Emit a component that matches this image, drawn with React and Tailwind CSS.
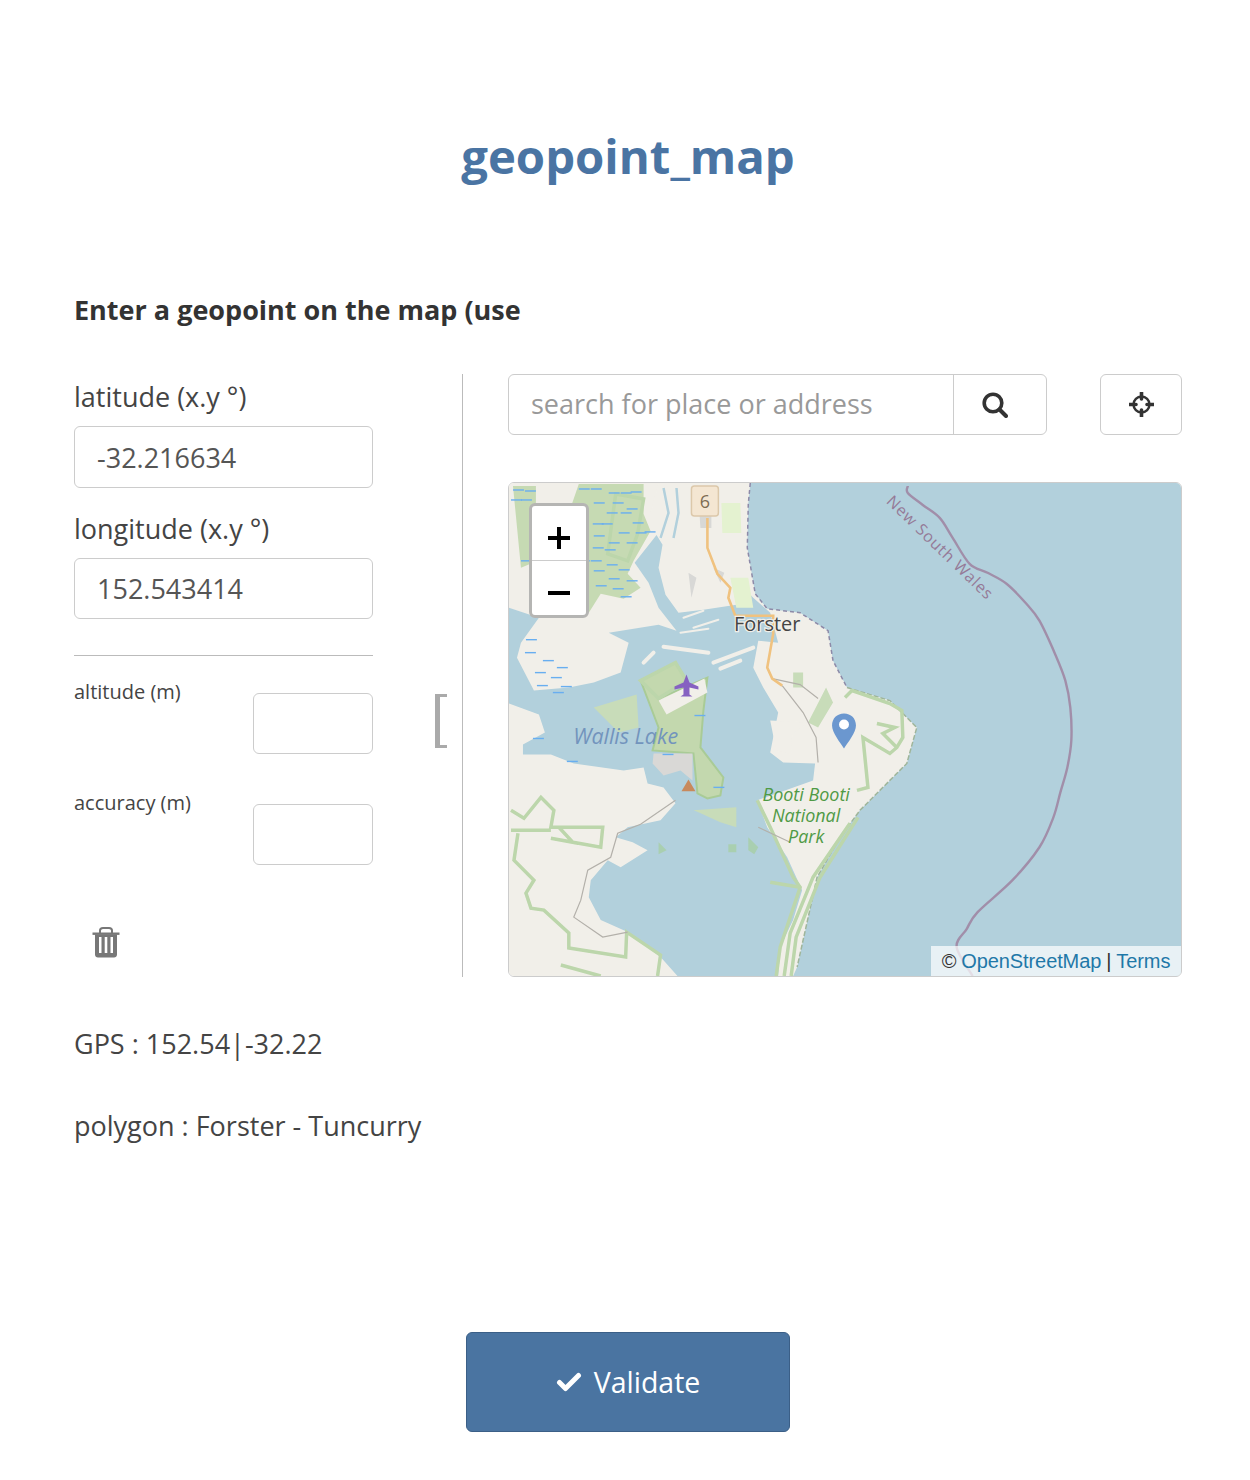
const ocean = 'M242,0 L240,21 239,65 247,111 259,126 292,130 320,148 325,178 339,205 382,218 409,245 399,281 382,298 352,328 332,355 309,395 289,485 285,494 674,494 674,0 Z';
const lake = 'M0,60 L126,80 148,52 154,62 150,85 157,112 170,130 195,127 228,122 235,105 245,115 262,130 270,160 250,158 245,185 255,205 270,230 262,270 275,280 307,281 305,298 249,318 259,345 279,375 294,408 285,438 272,465 270,494 169,494 152,475 119,450 92,438 80,415 82,398 99,378 112,385 139,368 124,360 107,355 119,345 152,338 167,321 155,305 139,301 135,285 115,288 65,281 42,272 14,272 14,262 36,250 30,232 0,221 Z';
const northLand = 'M0,0 L150,0 142,30 132,60 126,80 140,100 150,125 168,148 150,142 100,150 120,160 112,190 85,200 60,205 25,208 8,175 12,160 30,135 0,125 Z';
const islandWood = 'M132,198 L167,180 178,198 150,216 199,195 195,228 192,265 215,295 212,313 199,316 189,311 185,271 144,268 150,245 Z';

const stateBorder = [
  [400, 3], [400, 10], [415, 22], [432, 35], [445, 55], [462, 81], [480, 90], [499, 101], [518, 120], [532, 138], [548, 172], [558, 198],
  [563, 225], [564, 258], [560, 285], [553, 310], [546, 335], [532, 365], [505, 398], [470, 430], [459, 447], [449, 465], [465, 494],
];

const marshDashes = [
  [4, 7], [16, 8], [2, 17], [12, 17], [70, 6], [82, 6], [100, 10], [112, 10], [122, 9], [85, 20], [104, 20], [118, 26], [98, 30], [112, 30],
  [124, 40], [84, 41], [93, 41], [110, 50], [127, 50], [136, 49], [85, 53], [100, 60], [118, 60], [84, 65], [96, 67], [12, 78], [70, 78],
  [82, 78], [98, 82], [110, 87], [85, 88], [100, 96], [118, 98], [87, 103], [104, 106], [112, 114], [17, 157], [16, 170], [34, 178], [26, 190],
  [48, 185], [42, 195], [28, 203], [52, 204], [44, 210], [24, 256], [58, 279], [154, 272], [205, 305], [186, 233],
];

const parkBorders = [
  'M2,328 L15,336 32,315 45,328 42,345 94,345 92,365 42,356 64,360 50,345',
  'M2,348 L42,348 M9,351 L5,378 25,398 17,411 22,426 35,428 60,451 60,466 117,475 118,450 152,473 149,494',
  'M52,483 L92,494',
  'M107,11 L135,16 129,51 119,78 99,71 Z',
  'M132,198 L167,180 178,198 150,216 Z',
  'M337,215 L344,208 382,221 394,228 395,255 389,265 382,271 355,255 360,305 349,308',
  'M369,241 L387,245 375,251 389,265',
  'M249,318 L262,345 285,395 292,405 272,465 268,494',
  'M342,341 L305,395 282,451 276,494',
  'M350,335 L312,395 288,455 283,494',
  'M292,405 L262,400',
];

// catmull-rom through the points, so the state border reads as a curve
function smooth(points) {
  let d = `M${points[0][0]},${points[0][1]}`;
  for (let i = 0; i < points.length - 1; i++) {
    const p0 = points[i - 1] || points[i];
    const p1 = points[i];
    const p2 = points[i + 1];
    const p3 = points[i + 2] || p2;
    d += ` C${p1[0] + (p2[0] - p0[0]) / 6},${p1[1] + (p2[1] - p0[1]) / 6} ${p2[0] - (p3[0] - p1[0]) / 6},${p2[1] - (p3[1] - p1[1]) / 6} ${p2[0]},${p2[1]}`;
  }
  return d;
}

function MapDrawing() {
  return (
    <svg viewBox="0 0 674 494" preserveAspectRatio="none" className="block w-full h-full font-['Open_Sans',sans-serif]">
      <defs>
        <filter id="soft">
          <feGaussianBlur stdDeviation="0.7" />
        </filter>
      </defs>
      <rect width="674" height="494" fill="#f1efe9" />
      <g filter="url(#soft)">
        <path d={lake} fill="#b2d0dc" />
        <path d={northLand} fill="#f1efe9" />
        <path d="M152,55 L160,30 155,5 M165,55 L170,30 168,5" fill="none" stroke="#b2d0dc" strokeWidth="2.5" />
        <g fill="none" stroke="#f1efe9" strokeLinecap="round">
          <path d="M155,164 L200,170 M205,180 L245,165 M135,180 L145,170 M212,186 L232,178" strokeWidth="4" />
          <path d="M175,135 L195,128 M185,145 L210,137 M172,150 L200,146" strokeWidth="2" />
        </g>
        <path d="M262,238 L268,268 283,272 284,252 300,240 Z" fill="#f1efe9" />
        <path d="M70,1 L135,1 135,31 142,48 125,78 119,91 132,105 115,116 92,111 80,130 60,100 60,30 Z" fill="#c6dab3" />
        <path d="M4,3 L27,3 27,28 20,50 24,80 12,85 Z" fill="#c6dab3" />
        <path d={islandWood} fill="#c3d8ae" stroke="#a9cb96" strokeWidth="2" />
        <path d="M150,218 L196,196 199,210 158,232 Z" fill="#f1efe9" />
        <path d="M145,271 L184,271 184,298 172,288 155,293 144,281 Z" fill="#d9d8d6" />
        <path d="M85,225 L128,212 130,245 110,250 Z M185,328 L228,325 228,345 212,340 190,330 Z" fill="#c8dcb9" />
        <path d="M240,355 L250,365 246,372 240,368 Z M150,360 L158,368 150,372 Z M220,362 L228,362 228,370 220,370 Z" fill="#a9cfb0" />
        <path d="M213,20 L232,20 233,50 214,50 Z M222,95 L240,95 245,125 228,125 Z" fill="#e4f2d0" />
        <path d="M190,15 L203,15 203,45 192,45 Z M205,85 L216,90 212,100 Z M180,90 L188,95 183,115 Z" fill="#d8d8d6" />
        <path d="M285,190 L295,190 295,205 285,205 Z M300,240 L318,205 325,220 310,245 Z" fill="#c8dcb9" />
        <path d={ocean} fill="#b2d0dc" />
        <path d="M242,0 L240,21 239,65 247,111 259,126 292,130 320,148 325,178 339,205" fill="none" stroke="#8d8aa8" strokeWidth="1.5" strokeDasharray="4 3" />
        <path d="M339,205 L382,218 409,245 399,281 382,298 352,328 332,355 309,395 289,485" fill="none" stroke="#9fb59a" strokeWidth="1.5" strokeDasharray="5 2" />
        {parkBorders.map((d) => (
          <path key={d} d={d} fill="none" stroke="#bcd6ab" strokeWidth="3.5" />
        ))}
        <path d="M167,318 L132,342 109,351 102,375 79,388 72,418 65,435 94,455 119,450 M264,196 L292,202 310,216 M274,203 L295,230 308,255 310,280 M250,345 L282,360" fill="none" stroke="#b3b0aa" strokeWidth="1.2" />
        <path d="M199,35 L199,65 209,91 222,105 220,115 227,133 265,133 265,151 259,185 264,196 274,203" fill="none" stroke="#f0c27f" strokeWidth="2.6" />
        <path d={smooth(stateBorder)} fill="none" stroke="#a18ea9" strokeWidth="2.4" />
        {marshDashes.map(([x, y]) => (
          <line key={`${x}-${y}`} x1={x} y1={y} x2={x + 11} y2={y} stroke="#68aef0" strokeWidth="1.4" />
        ))}
      </g>
      <rect x="183" y="3" width="27" height="30" rx="3" fill="#f4e6d2" stroke="#dcc8aa" strokeWidth="1.5" />
      <text x="196.5" y="25" textAnchor="middle" fontSize="18" fill="#7d6c52">6</text>
      <path d="M178,195 L181,203 190,207 190,210 181,208 181,215 184,217 172,217 175,215 175,208 166,210 166,207 175,203 Z" fill="#8661c1" transform="translate(0,-3)" />
      <path d="M180,297 L187,309 173,309 Z" fill="#c8895c" />
      <path d="M336,231 C343,231 348,236 348,243 C348,250 340,260 336,266 C332,260 324,250 324,243 C324,236 329,231 336,231 Z" fill="#6b97cf" />
      <circle cx="336" cy="242" r="5" fill="#fff" />
      <text x="259" y="148" textAnchor="middle" fontSize="20" fill="#444" stroke="#f1efe9" strokeWidth="2.5" paintOrder="stroke">Forster</text>
      <text x="117" y="262" textAnchor="middle" fontSize="21.5" fontStyle="italic" fill="#7294bd">Wallis Lake</text>
      <g fontSize="18" fontStyle="italic" fill="#4f9a45" textAnchor="middle">
        <text x="298" y="319">Booti Booti</text>
        <text x="298" y="340">National</text>
        <text x="298" y="361">Park</text>
      </g>
      <text x="432" y="70" textAnchor="middle" fontSize="16" letterSpacing="0.8" fill="#957a97" transform="rotate(44 432 65)">New South Wales</text>
    </svg>
  );
}

function Field({ label, value, height }) {
  return (
    <div>
      <label className="block text-[27px] leading-[38px] text-[#444] mb-[10px]">{label}</label>
      <input
        readOnly
        value={value}
        className={`block w-full ${height} px-[22px] text-[27px] text-[#555] bg-white border border-[#ccc] rounded-[6px]`}
      />
    </div>
  );
}

function SmallField({ label }) {
  return (
    <div className="flex justify-between">
      <label className="text-[20px] leading-[24px] text-[#444]">{label}</label>
      <input readOnly className="block mt-[13px] w-[120px] h-[61px] bg-white border border-[#ccc] rounded-[6px]" />
    </div>
  );
}

export default function App() {
  return (
    <div className="min-h-[1480px] bg-white pl-[74px] pr-[68px] pt-[125px] font-['Open_Sans',sans-serif] text-[#444]">
      <h1 className="text-center text-[47.3px] leading-[61px] font-bold text-[#4a74a3]">geopoint_map</h1>

      <p className="mt-[105px] text-[27px] leading-[38px] font-bold text-[#333]">Enter a geopoint on the map (use</p>

      <div className="mt-[45px] flex">
        <div className="w-[389px] flex border-r border-[#bbb] h-[603px]">
          <div className="w-[299px] pt-[4px]">
            <div className="flex flex-col gap-[22px]">
              <Field label="latitude (x.y °)" value="-32.216634" height="h-[62px]" />
              <Field label="longitude (x.y °)" value="152.543414" height="h-[61px]" />
            </div>
            <div className="mt-[36px] border-t border-[#bbb] pt-[24px] flex flex-col gap-[37px]">
              <SmallField label="altitude (m)" />
              <SmallField label="accuracy (m)" />
            </div>
            <button className="mt-[62px] ml-[18px] block text-[#777]">
              <svg width="28" height="32" viewBox="0 0 28 32" fill="currentColor">
                <path d="M0.5 5.5h27v2.4h-27z" />
                <path d="M8 6.5V3.5C8 2 9.5 1 11 1h6c1.5 0 3 1 3 2.5v3" fill="none" stroke="currentColor" strokeWidth="2" />
                <path fillRule="evenodd" d="M3 7.5h22v20c0 1.7-1.3 3-3 3H6c-1.700 0-3-1.300-3-3z M7 10v16h2.500V10z M12.700 10v16h2.600V10z M18.500 10v16H21V10z" />
              </svg>
            </button>
          </div>
          <div className="ml-[62px] mt-[320px] w-[12px] h-[54px] border-y-[3px] border-l-[5px] border-[#aaa]" />
        </div>

        <div className="ml-[45px] flex-1">
          <div className="flex justify-between">
            <div className="flex w-[539px] h-[61px] border border-[#ccc] rounded-[6px]">
              <input
                readOnly
                placeholder="search for place or address"
                className="flex-1 min-w-0 px-[22px] text-[27px] placeholder:text-[#999] rounded-l-[6px]"
              />
              <button className="w-[93px] pr-[10px] flex items-center justify-center border-l border-[#ccc] text-[#333]">
                <svg width="26" height="26" viewBox="0 0 26 26" fill="none" stroke="currentColor" strokeLinecap="round">
                  <circle cx="11" cy="11" r="8.800" strokeWidth="3.600" />
                  <path d="M17.500 17.500L24 24" strokeWidth="4" />
                </svg>
              </button>
            </div>
            <button className="w-[82px] h-[61px] flex items-center justify-center border border-[#ccc] rounded-[6px] text-[#333]">
              <svg width="25" height="25" viewBox="0 0 25 25" fill="none" stroke="currentColor">
                <circle cx="12.500" cy="12.500" r="8" strokeWidth="2.400" />
                <path d="M12.500 0.500v6.500M12.500 18v6.500M0.500 12.500H7M18 12.500h6.500" strokeWidth="3.600" strokeLinecap="round" />
              </svg>
            </button>
          </div>

          <div className="relative mt-[47px] h-[495px] border border-[#ccc] rounded-[6px] overflow-hidden">
            <MapDrawing />
            <div className="absolute left-[20px] top-[20px] w-[60px] rounded-[6px] border-[3px] border-[#b5b5b3] bg-white overflow-hidden">
              <div className="h-[55px] pt-[9px] flex items-center justify-center border-b border-[#ccc] text-black">
                <svg width="24" height="24" viewBox="0 0 24 24"><path d="M12 1v22M1 12h22" stroke="currentColor" strokeWidth="4" /></svg>
              </div>
              <div className="h-[54px] pt-[9px] flex items-center justify-center text-black">
                <svg width="24" height="24" viewBox="0 0 24 24"><path d="M1 12h22" stroke="currentColor" strokeWidth="4" /></svg>
              </div>
            </div>
            <div className="absolute right-0 bottom-0 w-[250px] h-[30px] bg-white/70 flex items-center justify-center gap-[5px] font-['Liberation_Sans',sans-serif] text-[20px] tracking-[-0.1px] text-[#333]">
              <span>©</span>
              <a className="text-[#1f78a8]">OpenStreetMap</a>
              <span>|</span>
              <a className="text-[#1f78a8]">Terms</a>
            </div>
          </div>
        </div>
      </div>

      <p className="mt-[48px] text-[27px] leading-[38px]">GPS : 152.54|-32.22</p>
      <p className="mt-[44px] text-[27px] leading-[38px]">polygon : Forster - Tuncurry</p>

      <div className="mt-[187px] flex justify-center">
        <button className="w-[324px] h-[100px] flex items-center justify-center gap-[12px] bg-[#4a74a1] border border-[#3b5f87] rounded-[6px] text-white text-[28.5px]">
          <svg width="26" height="20" viewBox="0 0 25 20" fill="none" stroke="currentColor" strokeWidth="5" strokeLinejoin="round" strokeLinecap="round">
            <path d="M3 10.500L9 16.500L22 3.500" />
          </svg>
          Validate
        </button>
      </div>
    </div>
  );
}
